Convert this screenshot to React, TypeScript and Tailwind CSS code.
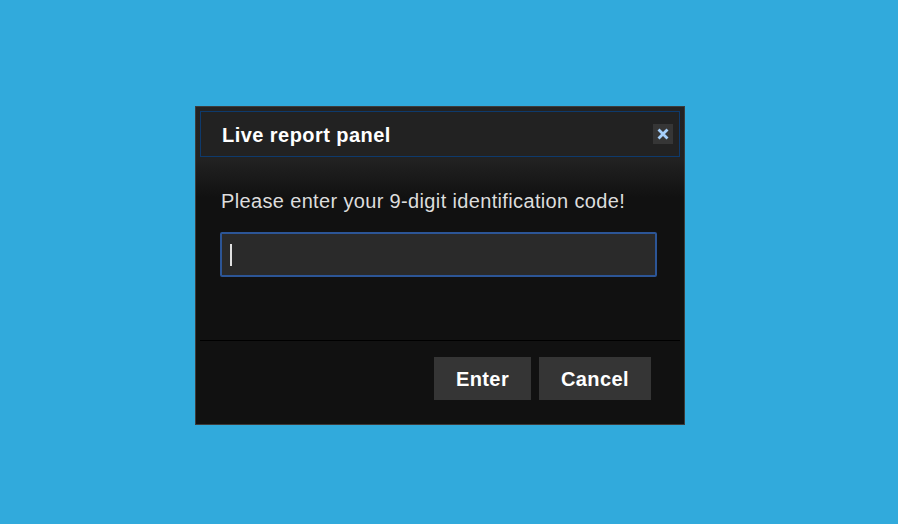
import React from "react";

export default function App() {
  return (
    <div className="min-h-[524px] w-full bg-[#31aadc] pl-[195px] pt-[106px] font-['Liberation_Sans',Arial,sans-serif]">
      <div className="flex h-[319px] w-[490px] flex-col border border-[#3c3c3c] bg-[linear-gradient(#232323_0px,#222222_52px,#111111_90px,#111111_100%)] p-1">
        <div className="flex h-[46px] items-center justify-between border border-[#0e3a6c] bg-[#222222] pl-[21px] pr-[6px]">
          <span className="pt-[1px] text-[20px] font-bold tracking-[0.45px] text-white">Live report panel</span>
          <button className="flex h-[20px] w-[20px] items-center justify-center bg-[#363636]">
            <svg width="12" height="12" viewBox="0 0 12 12">
              <path d="M2.5 2.5 L9.5 9.5 M9.5 2.5 L2.5 9.5" stroke="#a6cffa" strokeWidth="2.8" strokeLinecap="square" />
            </svg>
          </button>
        </div>
        <div className="px-5">
          <p className="mt-[33px] pl-[1px] text-[20px] leading-[23px] tracking-[0.35px] text-[#dddddd]">
            Please enter your 9-digit identification code!
          </p>
          <div className="mt-[19px] flex h-[45px] w-[437px] items-center rounded-[2px] border-2 border-[#2c5596] bg-[#2a2a2a] pl-[8px]">
            <span className="block h-[22px] w-[2px] bg-[#e0e0e0]" />
          </div>
        </div>
        <div className="mt-[63px] h-px w-full bg-black" />
        <div className="mt-[16px] flex justify-end gap-2 pr-[29px]">
          <button className="h-[43px] w-[97px] bg-[#353535] text-[20px] font-bold tracking-[0.4px] text-white">Enter</button>
          <button className="h-[43px] w-[112px] bg-[#353535] text-[20px] font-bold tracking-[0.4px] text-white">Cancel</button>
        </div>
      </div>
    </div>
  );
}
